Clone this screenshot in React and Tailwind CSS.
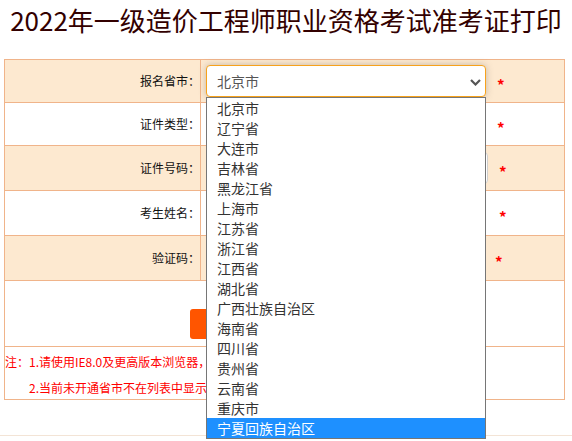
import React from "react";

const provinces = [
  "北京市",
  "辽宁省",
  "大连市",
  "吉林省",
  "黑龙江省",
  "上海市",
  "江苏省",
  "浙江省",
  "江西省",
  "湖北省",
  "广西壮族自治区",
  "海南省",
  "四川省",
  "贵州省",
  "云南省",
  "重庆市",
  "宁夏回族自治区",
];

const Star = () => (
  <span className="inline-block text-[15px] font-bold text-[#ff0000] leading-none translate-y-[3px]">*</span>
);

const Row = ({ label, shade, h, children }) => (
  <div className={`flex border-t border-[#f0b48a] ${h} ${shade ? "bg-[#fde9d0]" : "bg-white"}`}>
    <div className="w-[196px] border-r border-[#f0b48a] flex items-center justify-end text-[12px] text-[#111]">
      {label}
    </div>
    <div className="flex-1 flex items-center pl-[5px]">{children}</div>
  </div>
);

export default function App() {
  return (
    <div className="relative w-[572px] h-[441px] bg-white overflow-hidden font-['Noto_Sans_CJK_SC',sans-serif]">
      {/* 标题 */}
      <h1 className="h-[59px] pt-[1px] w-[572px] text-center text-[26px] leading-[38px] text-[#330000]">
        2022年一级造价工程师职业资格考试准考证打印
      </h1>

      {/* 表单 */}
      <div className="ml-[4px] w-[561px] border-x border-b border-[#f0b48a]">
        <Row label="报名省市：" shade h="h-[43px]">
          <div className="relative w-[280px] h-[32px] rounded-[4px] border border-[#f7a21b] bg-white shadow-[0_0_7px_rgba(90,90,90,0.35)] flex items-center pl-[10px] text-[14px] text-[#555]">
            北京市
            <svg className="absolute right-[4px] top-[13px]" width="11" height="7" viewBox="0 0 11 7">
              <polyline points="1,1 5.5,5.5 10,1" fill="none" stroke="#555" strokeWidth="2.2" />
            </svg>
          </div>
          <span className="ml-[11px]"><Star /></span>
        </Row>
        <Row label="证件类型：" h="h-[43px]">
          <div className="w-[280px] h-[30px] rounded-[4px] border border-[#ccc]" />
          <span className="ml-[11px]"><Star /></span>
        </Row>
        <Row label="证件号码：" shade h="h-[45px]">
          <div className="w-[282px] h-[32px] rounded-[4px] border border-[#cfcfcf] bg-white" />
          <span className="ml-[11px]"><Star /></span>
        </Row>
        <Row label="考生姓名：" h="h-[45px]">
          <div className="w-[279px] h-[32px] rounded-[4px] border border-[#cfcfcf] bg-white" />
          <span className="ml-[14px]"><Star /></span>
        </Row>
        <Row label="验证码：" shade h="h-[45px]">
          <div className="w-[279px] h-[32px] rounded-[4px] border border-[#cfcfcf] bg-white" />
          <span className="ml-[10px]"><Star /></span>
        </Row>
        <div className="h-[66px] border-t border-[#f0b48a] flex justify-center pt-[28px]">
          <button className="w-[189px] h-[30px] rounded-[3px] bg-[#ff5500]" />
        </div>
        <div className="h-[53px] border-t border-[#f0b48a] text-[12px] text-[#ff0000] pt-[5px]">
          <p className="leading-[20px]">注：1.请使用IE8.0及更高版本浏览器，</p>
          <p className="leading-[20px] mt-[6px] pl-[24px]">2.当前未开通省市不在列表中显示。</p>
        </div>
      </div>

      <div className="mt-[35px] border-t border-[#f3e4d6]" />

      {/* 下拉列表 */}
      <ul className="absolute left-[206px] top-[97px] w-[280px] border border-[#767676] bg-white">
        {provinces.map((p, i) => (
          <li
            key={p}
            className={`h-[20px] leading-[20px] pl-[10px] text-[14px] ${
              i === provinces.length - 1 ? "bg-[#1e90ff] text-white" : "text-[#333]"
            }`}
          >
            {p}
          </li>
        ))}
      </ul>
    </div>
  );
}
